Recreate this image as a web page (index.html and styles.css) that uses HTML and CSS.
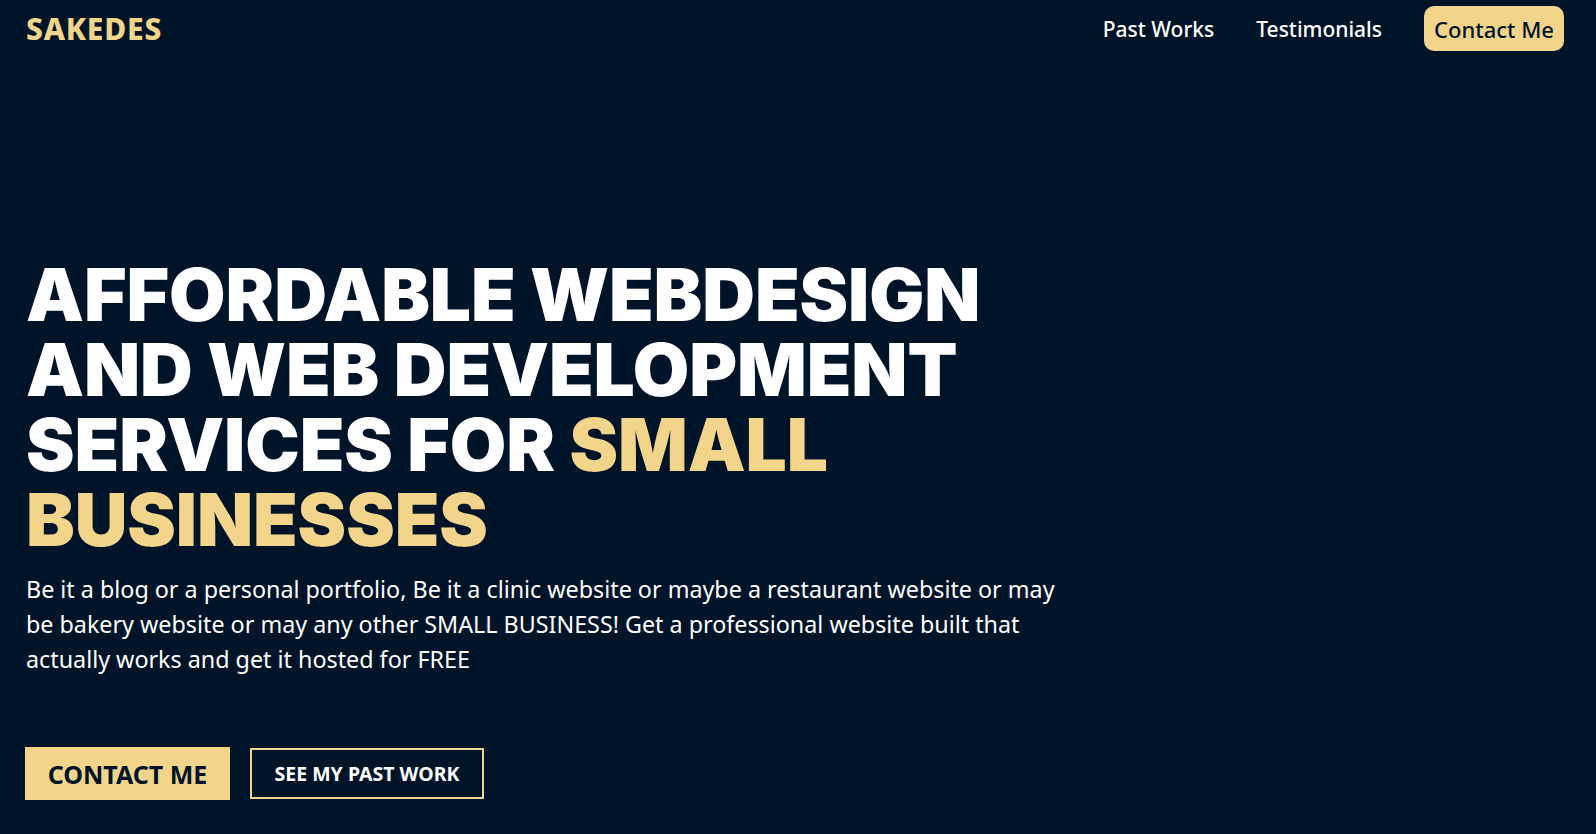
FILE: index.html
```html
<!DOCTYPE html>
<html lang="en">
<head>
<meta charset="utf-8">
<title>Sakedes</title>
<link rel="stylesheet" href="styles.css">
</head>
<body>
<header class="topbar">
  <a class="logo" href="#">SAKEDES</a>
  <nav class="nav">
    <a class="nav-link" href="#">Past Works</a>
    <a class="nav-link" href="#">Testimonials</a>
    <a class="nav-btn" href="#">Contact Me</a>
  </nav>
</header>
<main class="hero">
  <h1 class="hero-title">AFFORDABLE WEBDESIGN AND WEB DEVELOPMENT SERVICES FOR <span class="gold">SMALL BUSINESSES</span></h1>
  <p class="hero-text">Be it a blog or a personal portfolio, Be it a clinic website or maybe a restaurant website or may be bakery website or may any other SMALL BUSINESS! Get a professional website built that actually works and get it hosted for FREE</p>
  <div class="actions">
    <a class="btn btn-solid" href="#">CONTACT ME</a>
    <a class="btn btn-outline" href="#">SEE MY PAST WORK</a>
  </div>
</main>
</body>
</html>
```

FILE: styles.css
```css
* { box-sizing: border-box; }
html, body { margin: 0; padding: 0; }
body {
  background: #001429;
  color: #ffffff;
  font-family: "Noto Sans", "Open Sans", sans-serif;
  height: 834px;
  overflow: hidden;
}
a { text-decoration: none; color: inherit; }

.topbar {
  display: flex;
  justify-content: space-between;
  align-items: center;
  padding: 6px 32px 0 26px;
  height: 51px;
}
.logo {
  font-family: "Noto Sans", sans-serif;
  font-weight: 800;
  font-size: 30px;
  color: #f2d48b;
  letter-spacing: 0.8px;
}
.nav {
  display: flex;
  align-items: center;
  gap: 42px;
}
.nav-link {
  font-size: 21px;
  font-weight: 500;
  color: #ffffff;
}
.nav-btn {
  background: #f2d48b;
  color: #001429;
  font-size: 22px;
  font-weight: 500;
  border-radius: 10px;
  height: 45px;
  padding: 0 10px;
  display: flex;
  align-items: center;
}

.hero {
  padding: 206px 26px 0 26px;
}
.hero-title {
  margin: 0;
  font-family: "Inter", sans-serif;
  font-weight: 900;
  font-size: 73px;
  line-height: 75px;
  letter-spacing: -0.1px;
  max-width: 1010px;
  color: #ffffff;
}
.gold { color: #f2d48b; }

.hero-text {
  margin: 15px 0 0 0;
  font-size: 23.3px;
  line-height: 35px;
  max-width: 1040px;
}

.actions {
  display: flex;
  align-items: center;
  gap: 20px;
  margin-top: 70px;
  margin-left: -1px;
}
.btn {
  display: flex;
  align-items: center;
  justify-content: center;
  font-weight: 700;
}
.btn-solid {
  background: #f2d48b;
  color: #001429;
  font-size: 25px;
  width: 205px;
  height: 53px;
}
.btn-outline {
  border: 2px solid #f2d48b;
  color: #ffffff;
  font-size: 19.5px;
  width: 234px;
  height: 51px;
}
```
